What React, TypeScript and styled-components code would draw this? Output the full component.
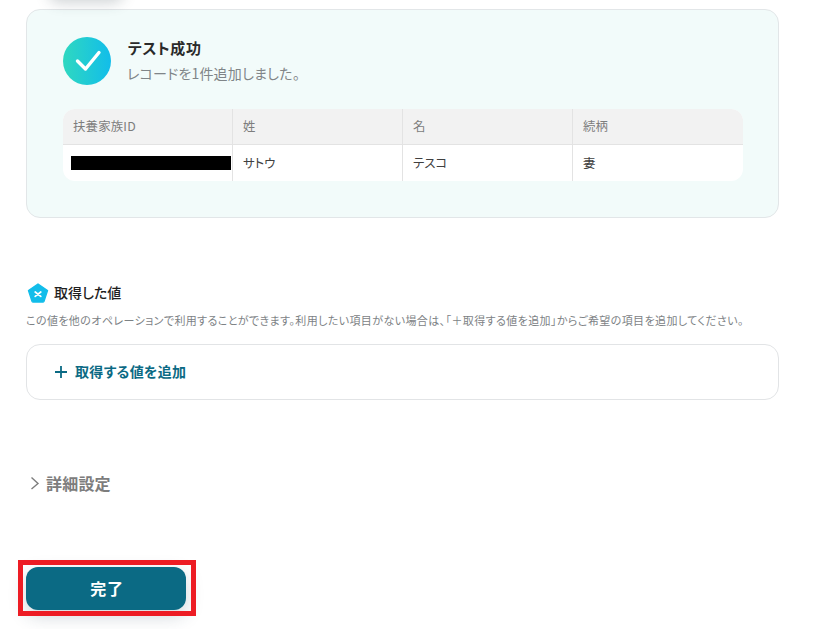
import React from "react";
import styled, { createGlobalStyle } from "styled-components";

const Global = createGlobalStyle`
  html, body { margin: 0; padding: 0; background: #fff; height: 100%; overflow: hidden; }
  body { font-family: "Noto Sans CJK JP", "Noto Sans", sans-serif; font-feature-settings: "palt"; }
`;

const Page = styled.div`
  position: relative;
  width: 813px;
  height: 629px;
  overflow: hidden;
  padding: 9px 34px 0 26px;
  box-sizing: border-box;
`;

const TopShadow = styled.div`
  position: absolute;
  left: 48px;
  top: -24px;
  width: 76px;
  height: 24px;
  border-radius: 12px;
  box-shadow: 0 3px 14px rgba(40, 60, 70, 0.22);
`;

const ResultCard = styled.section`
  box-sizing: border-box;
  height: 209px;
  border: 1px solid #e2e6e8;
  border-radius: 14px;
  background: #f2fbfa;
  padding: 27px 35px 0 36px;
`;

const ResultHead = styled.div`
  display: flex;
  gap: 16px;
  height: 48px;
`;

const ResultText = styled.div`
  display: flex;
  flex-direction: column;
`;

const ResultTitle = styled.div`
  padding-left: 1px;
  font-size: 15px;
  line-height: 22px;
  font-weight: 700;
  letter-spacing: 0.6px;
  color: #2a2a2a;
`;

const ResultSub = styled.div`
  font-size: 14px;
  line-height: 20px;
  margin-top: 4px;
  letter-spacing: 0.2px;
  color: #808588;
`;

const Table = styled.div`
  margin-top: 24px;
  width: 680px;
  border-radius: 12px;
  overflow: hidden;
  background: #fff;
  display: grid;
  grid-template-columns: 170px 170px 170px 170px;
  grid-template-rows: 36px 36px;
`;

const HeadCell = styled.div`
  box-sizing: border-box;
  background: #f2f2f2;
  border-bottom: 1px solid #e3e3e3;
  border-right: 1px solid #e3e3e3;
  padding-left: 10px;
  font-size: 12.4px;
  line-height: 35px;
  letter-spacing: 0.2px;
  color: #7d7d7d;
  &:nth-child(4) { border-right: none; }
`;

const BodyCell = styled.div`
  box-sizing: border-box;
  border-right: 1px solid #e3e3e3;
  padding-left: 10px;
  font-size: 12.4px;
  line-height: 36px;
  color: #404040;
  display: flex;
  align-items: center;
  &:last-child { border-right: none; }
`;

const RedactedCell = styled(BodyCell)`
  padding: 0 1px 0 8px;
`;

const Redacted = styled.div`
  width: 160px;
  height: 14px;
  margin-top: -1px;
  background: #000;
`;

const SectionHead = styled.div`
  display: flex;
  align-items: center;
  gap: 5px;
  margin-top: 64px;
  padding-left: 1px;
  height: 22px;
`;

const SectionTitle = styled.h3`
  margin: -2px 0 0;
  font-size: 14px;
  line-height: 22px;
  font-weight: 500;
  color: #1f1f1f;
`;

const Hint = styled.p`
  margin: 9px 0 0;
  font-size: 11px;
  line-height: 14px;
  letter-spacing: 0.4px;
  color: #7d8285;
  white-space: nowrap;
`;

const AddBox = styled.div`
  box-sizing: border-box;
  margin-top: 17px;
  height: 56px;
  border: 1px solid #e2e4e6;
  border-radius: 14px;
  background: #fff;
  display: flex;
  align-items: center;
  gap: 7px;
  padding-left: 27px;
`;

const AddLabel = styled.span`
  margin-top: -3px;
  font-size: 14px;
  font-weight: 700;
  letter-spacing: 0.3px;
  color: #0b6a84;
`;

const Details = styled.div`
  display: flex;
  align-items: center;
  gap: 6px;
  margin-top: 71px;
  padding-left: 4px;
  height: 24px;
`;

const DetailsLabel = styled.span`
  margin-top: -1px;
  font-size: 16px;
  line-height: 24px;
  font-weight: 700;
  letter-spacing: 0.2px;
  color: #7d7d7d;
`;

const DoneButton = styled.button`
  display: block;
  box-sizing: border-box;
  margin-top: 72px;
  padding: 0 0 2px 2px;
  width: 160px;
  height: 43px;
  border: none;
  border-radius: 12px;
  background: #0b6a84;
  color: #fff;
  font-family: inherit;
  font-feature-settings: inherit;
  font-size: 16px;
  font-weight: 700;
  letter-spacing: 0.8px;
  box-shadow: 0 6px 18px rgba(40, 70, 90, 0.22);
`;

const Annotation = styled.div`
  position: absolute;
  left: 18px;
  top: 560px;
  width: 178px;
  height: 56px;
  box-sizing: border-box;
  border: 5px solid #ed1c24;
`;

const CheckIcon = () => (
  <svg width="48" height="48" viewBox="0 0 48 48" style={{ flex: "none" }}>
    <defs>
      <linearGradient id="g" x1="0" x2="1" y1="0" y2="0">
        <stop offset="0" stopColor="#2fd8c0" />
        <stop offset="1" stopColor="#12bdea" />
      </linearGradient>
    </defs>
    <circle cx="24" cy="24" r="24" fill="url(#g)" />
    <path d="M14.5 24 L22.5 32 L36 15.5" fill="none" stroke="#fff" strokeWidth="3.4" strokeLinecap="round" strokeLinejoin="round" />
  </svg>
);

const PentagonIcon = () => (
  <svg width="22" height="20" viewBox="0 0 22 20" style={{ flex: "none" }}>
    <path d="M11 1 L20.5 7.6 L17 18.2 Q16.7 19 15.8 19 L6.2 19 Q5.3 19 5 18.2 L1.5 7.6 Z" fill="#12bdea" stroke="#12bdea" strokeWidth="1.4" strokeLinejoin="round" />
    <path d="M8.2 9 L13.8 13.4 M13.8 9 L8.2 13.4" fill="none" stroke="#fff" strokeWidth="1.7" strokeLinecap="round" />
  </svg>
);

const PlusIcon = () => (
  <svg width="14" height="14" viewBox="0 0 14 14" style={{ flex: "none" }}>
    <path d="M7 1 V13 M1 7 H13" stroke="#0b6a84" strokeWidth="1.8" />
  </svg>
);

const ChevronIcon = () => (
  <svg width="10" height="14" viewBox="0 0 10 14" style={{ flex: "none" }}>
    <path d="M1.5 1.5 L8 7.5 L1.5 13" fill="none" stroke="#7d7d7d" strokeWidth="1.4" />
  </svg>
);

export default function App() {
  return (
    <Page>
      <Global />
      <TopShadow />
      <ResultCard>
        <ResultHead>
          <CheckIcon />
          <ResultText>
            <ResultTitle>テスト成功</ResultTitle>
            <ResultSub>レコードを1件追加しました。</ResultSub>
          </ResultText>
        </ResultHead>
        <Table>
          <HeadCell>扶養家族ID</HeadCell>
          <HeadCell>姓</HeadCell>
          <HeadCell>名</HeadCell>
          <HeadCell>続柄</HeadCell>
          <RedactedCell><Redacted /></RedactedCell>
          <BodyCell>サトウ</BodyCell>
          <BodyCell>テスコ</BodyCell>
          <BodyCell>妻</BodyCell>
        </Table>
      </ResultCard>
      <SectionHead>
        <PentagonIcon />
        <SectionTitle>取得した値</SectionTitle>
      </SectionHead>
      <Hint>この値を他のオペレーションで利用することができます。利用したい項目がない場合は、「＋取得する値を追加」からご希望の項目を追加してください。</Hint>
      <AddBox>
        <PlusIcon />
        <AddLabel>取得する値を追加</AddLabel>
      </AddBox>
      <Details>
        <ChevronIcon />
        <DetailsLabel>詳細設定</DetailsLabel>
      </Details>
      <DoneButton>完了</DoneButton>
      <Annotation />
    </Page>
  );
}
